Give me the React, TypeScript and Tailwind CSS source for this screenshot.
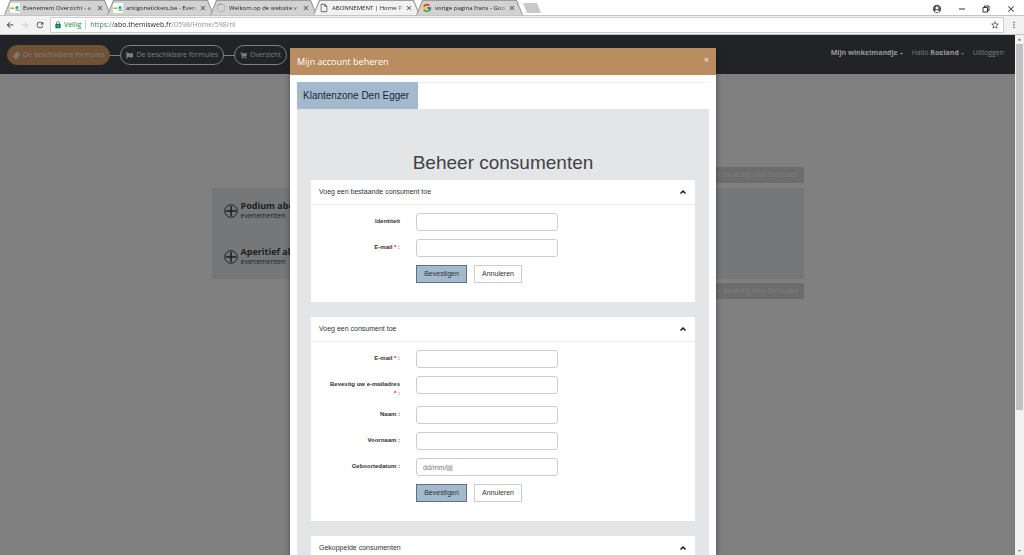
import type { ReactNode } from "react";
import { FaCaretDown, FaCaretUp, FaFlag, FaShoppingCart, FaTicketAlt } from "react-icons/fa";
import {
  MdAccountCircle,
  MdArrowBack,
  MdArrowForward,
  MdClose,
  MdLock,
  MdMoreVert,
  MdOutlineInsertDriveFile,
  MdRefresh,
  MdStarBorder,
} from "react-icons/md";
import { FcGoogle } from "react-icons/fc";
import { ChevronUp } from "lucide-react";

function ThemisIcon() {
  return (
    <svg viewBox="0 0 20 20" className="size-2.5 shrink-0">
      <rect width="20" height="20" rx="2" fill="#fafafa" />
      <path d="M1 9h7l2 4h9v3h-7l-3-4H1z" fill="#8cc63f" />
      <circle cx="14" cy="9" r="3" fill="#1d9bd1" />
    </svg>
  );
}

function LoadingIcon() {
  return (
    <svg viewBox="0 0 20 20" className="size-2.5 shrink-0" fill="none" strokeWidth="2">
      <circle cx="10" cy="10" r="8" stroke="#b5b5b5" />
      <path d="M3 6a8 8 0 0 1 7-4" stroke="#8a8a8a" />
    </svg>
  );
}

function PlusIcon() {
  return (
    <svg viewBox="0 0 28 28" className="size-3.5 shrink-0" fill="none" stroke="#1d1d1f">
      <circle cx="14" cy="14" r="12.5" strokeWidth="2" />
      <path d="M14 4v20M4 14h20" strokeWidth="3" />
    </svg>
  );
}

const tabs = [
  { title: "Evenement Overzicht - a", icon: <ThemisIcon />, active: false },
  { title: "antigonetickets.be - Even", icon: <ThemisIcon />, active: false },
  { title: "Welkom op de website v", icon: <LoadingIcon />, active: false },
  {
    title: "ABONNEMENT | Home P",
    icon: <MdOutlineInsertDriveFile className="size-2.5 shrink-0 text-[#666]" />,
    active: true,
  },
  { title: "vorige pagina frans - Goo", icon: <FcGoogle className="size-2.5 shrink-0" />, active: false },
];

function BrowserTabs() {
  return (
    <div className="flex h-[15px] items-end bg-white pl-1">
      {tabs.map((tab) => (
        <div
          key={tab.title}
          className="-mr-1 h-[15px] w-[107px] bg-[#9c9c9c] pt-px [clip-path:polygon(6px_0,101px_0,107px_100%,0_100%)]"
        >
          <div
            className={`flex h-3.5 items-center pr-[7px] pl-1.5 [clip-path:polygon(7px_0,100px_0,106px_100%,1px_100%)] ${
              tab.active ? "bg-[#f2f2f2]" : "bg-[#d2d2d2]"
            }`}
          >
            <button className="flex flex-1 items-center gap-[3px]">
              {tab.icon}
              <span className="flex-1 text-left text-[6px] leading-[12px] whitespace-nowrap text-[#222] [mask-image:linear-gradient(to_right,black_85%,rgba(0,0,0,0.3))]">
                {tab.title}
              </span>
            </button>
            <button aria-label="Tabblad sluiten" className="text-[#444]">
              <MdClose className="size-2" />
            </button>
          </div>
        </div>
      ))}
      <button
        aria-label="Nieuw tabblad"
        className="mb-0.5 ml-1 h-2.5 w-[18px] bg-[#c9c9c9] [clip-path:polygon(0_0,14px_0,100%_100%,4px_100%)]"
      />
      <div className="ml-auto flex items-center gap-4 pr-2 pb-px text-[#333]">
        <button aria-label="Profiel">
          <MdAccountCircle className="size-2.5 text-[#555]" />
        </button>
        <button aria-label="Minimaliseren">
          <svg viewBox="0 0 16 16" className="size-2" stroke="currentColor" strokeWidth="2">
            <path d="M2 8h12" />
          </svg>
        </button>
        <button aria-label="Vorig formaat">
          <svg viewBox="0 0 16 16" className="size-2" fill="none" stroke="currentColor" strokeWidth="2">
            <path d="M2 5h9v9H2zM5 5V2h9v9h-3" />
          </svg>
        </button>
        <button aria-label="Sluiten">
          <MdClose className="size-2.5" />
        </button>
      </div>
    </div>
  );
}

function AddressBar() {
  return (
    <div className="flex h-5 items-center gap-[5px] border-y border-[#c4c4c4] bg-[#f2f2f2] px-[5px]">
      <button aria-label="Vorige" className="text-[#444]">
        <MdArrowBack className="size-2.5" />
      </button>
      <button aria-label="Volgende" className="text-[#ccc]">
        <MdArrowForward className="size-2.5" />
      </button>
      <button aria-label="Vernieuwen" className="text-[#444]">
        <MdRefresh className="size-2.5" />
      </button>
      <div className="flex h-4 flex-1 items-center border border-[#cfcfcf] bg-white px-[3px] text-[7px]">
        <MdLock className="size-2 text-[#0b8043]" />
        <span className="ml-0.5 text-[#0b8043]">Veilig</span>
        <span className="mx-1 h-2.5 w-px bg-[#ccc]" />
        <input
          aria-label="Adres"
          defaultValue="https://abo.themisweb.fr/0598/Home/598/nl"
          className="min-w-0 flex-1 bg-[linear-gradient(to_right,#3d7a5a_23px,#222_23px,#222_81px,#888_81px)] bg-clip-text text-transparent outline-none"
        />
        <button aria-label="Bladwijzer toevoegen" className="text-[#555]">
          <MdStarBorder className="size-2.5" />
        </button>
      </div>
      <button aria-label="Menu" className="text-[#555]">
        <MdMoreVert className="size-2.5" />
      </button>
    </div>
  );
}

function SiteHeader() {
  return (
    <header className="flex h-[39px] items-center bg-[#222326] pr-[11px] pl-[7px] text-[7px] text-[#808080]">
      <nav className="flex items-center pt-px">
        <a
          href="#formules"
          className="flex h-5 items-center gap-[3px] rounded-full border border-[#6f5235] bg-[#6f5235] px-[5px]"
        >
          <FaTicketAlt className="size-[7px] -rotate-45" />
          De beschikbare formules
        </a>
        <span className="h-px w-2.5 bg-[#808080]" />
        <a href="#keuze" className="flex h-5 items-center gap-[3px] rounded-full border border-[#808080] px-[5px]">
          <FaFlag className="size-[7px]" />
          De beschikbare formules
        </a>
        <span className="h-px w-2.5 bg-[#808080]" />
        <a href="#overzicht" className="flex h-5 items-center gap-[3px] rounded-full border border-[#808080] px-[5px]">
          <FaShoppingCart className="size-[7px]" />
          Overzicht
        </a>
      </nav>
      <div className="ml-auto flex items-center gap-2 pb-0.5">
        <button className="flex items-center gap-px font-bold text-[#999]">
          Mijn winkelmandje
          <FaCaretDown className="size-[5px]" />
        </button>
        <button className="flex items-center gap-px">
          <span>
            Hallo <b className="text-[#999]">Roeland</b>
          </span>
          <FaCaretDown className="size-[5px]" />
        </button>
        <a href="#uitloggen">Uitloggen</a>
      </div>
    </header>
  );
}

function ConfirmFormulasButton() {
  return (
    <button className="h-4 self-end bg-[#6c6c6c] px-1.5 text-[7px] text-[#7f7f7f]">Ik bevestig mijn formules</button>
  );
}

function FormulaRow({ name }: { name: string }) {
  return (
    <div className="flex items-center gap-[3px] text-[#1d1d1f]">
      <PlusIcon />
      <div>
        <p className="text-[9px] leading-[10px] font-bold">{name}</p>
        <p className="text-[7px] leading-[9px]">evenementen</p>
      </div>
    </div>
  );
}

function Panel({ title, children }: { title: string; children?: ReactNode }) {
  return (
    <section className="bg-white">
      <button className="flex h-[25px] w-full items-center justify-between border-b border-[#ececec] px-2 text-[7px] text-[#333]">
        {title}
        <ChevronUp className="size-2 text-[#222]" strokeWidth={5} />
      </button>
      <div className="flex flex-col gap-2 pt-2 pb-[19px]">{children}</div>
    </section>
  );
}

type FieldProps = { id: string; label: string; required?: boolean; placeholder?: string };

function Field({ id, label, required, placeholder }: FieldProps) {
  return (
    <div className="flex items-start gap-4">
      <label htmlFor={id} className="w-[89px] pt-1 pl-3.5 text-right text-[6px] leading-[9px] font-bold text-[#333]">
        <span className="whitespace-nowrap">{label}</span>
        {required && (
          <>
            {" "}
            <span className="whitespace-nowrap text-[#e02020]">* :</span>
          </>
        )}
      </label>
      <input
        id={id}
        placeholder={placeholder}
        className="h-[18px] w-[142px] rounded-[3px] border border-[#ccc] px-1.5 text-[7px] text-[#444] placeholder:text-[#777]"
      />
    </div>
  );
}

function FormButtons() {
  return (
    <div className="flex gap-[7px] pl-[105px] text-[7px] text-[#333]">
      <button className="h-[18px] w-[51px] border border-[#5f7181] bg-[#a2b9ce]">Bevestigen</button>
      <button className="h-[18px] w-12 border border-[#ccc] bg-white">Annuleren</button>
    </div>
  );
}

function AccountModal() {
  return (
    <div
      role="dialog"
      aria-label="Mijn account beheren"
      className="w-full max-w-[426px] self-start bg-white shadow-[0_2px_6px_rgba(0,0,0,0.4)]"
    >
      <div className="flex h-[27px] items-center justify-between bg-[#b98d60] px-[7px] text-[9px] text-white">
        <h2>Mijn account beheren</h2>
        <button aria-label="Venster sluiten" className="pb-1 font-bold text-[#e8dccf]">
          ×
        </button>
      </div>
      <div className="p-[7px] font-['Liberation_Sans',Arial,sans-serif]">
        <div className="flex">
          <button className="h-[27px] bg-[#a2b9ce] pr-[9px] pl-1.5 text-[10px] text-[#1c2733]">
            Klantenzone Den Egger
          </button>
          <span className="flex-1 border-t border-[#eee]" />
        </div>
        <div className="bg-[#e4e5e7] px-3.5 pt-[42px] pb-4">
          <h1 className="mb-[5px] text-center text-[19px] leading-6 text-[#404246]">Beheer consumenten</h1>
          <div className="flex flex-col gap-[15px]">
            <Panel title="Voeg een bestaande consument toe">
              <Field id="identiteit" label="Identiteit" />
              <Field id="email-bestaand" label="E-mail" required />
              <FormButtons />
            </Panel>
            <Panel title="Voeg een consument toe">
              <Field id="email" label="E-mail" required />
              <Field id="email-bevestig" label="Bevestig uw e-mailadres" required />
              <Field id="naam" label="Naam :" />
              <Field id="voornaam" label="Voornaam :" />
              <Field id="geboortedatum" label="Geboortedatum :" placeholder="dd/mm/jjjj" />
              <FormButtons />
            </Panel>
            <Panel title="Gekoppelde consumenten" />
          </div>
        </div>
      </div>
    </div>
  );
}

function Scrollbar() {
  return (
    <div className="flex w-[9px] flex-col items-center bg-[#f1f1f1] px-px text-[#666]">
      <FaCaretUp className="my-0.5 size-[5px]" />
      <div className="w-full flex-[73] bg-[#c1c1c1]" />
      <div className="flex-[27]" />
      <FaCaretDown className="my-0.5 size-[5px]" />
    </div>
  );
}

export default function App() {
  return (
    <div className="flex h-screen flex-col overflow-hidden font-['Open_Sans','Noto_Sans',sans-serif]">
      <BrowserTabs />
      <AddressBar />
      <div className="flex min-h-0 flex-1">
        <div className="relative flex-1 overflow-hidden bg-[#808080]">
          <SiteHeader />
          <main className="mx-auto mt-[93px] flex max-w-[592px] flex-col">
            <ConfirmFormulasButton />
            <div className="mt-[5px] mb-1 flex flex-col gap-[27px] bg-[#757779] px-3 py-[13px]">
              <FormulaRow name="Podium abonnement" />
              <FormulaRow name="Aperitief abonnement" />
            </div>
            <ConfirmFormulasButton />
          </main>
          {/* modal over the page */}
          <div className="absolute inset-0 flex justify-center overflow-hidden pt-[13px] pr-[9px]">
            <AccountModal />
          </div>
        </div>
        <Scrollbar />
      </div>
    </div>
  );
}
